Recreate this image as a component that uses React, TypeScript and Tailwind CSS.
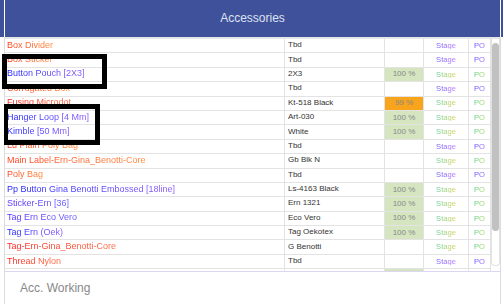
import React from "react";

type Tone = "o" | "r" | "b" | "p";
type Row = { name: string; tone: Tone; spec: string; pct?: "100" | "99"; green: boolean; ghost?: boolean };

const rows: Row[] = [
  { name: "Box Divider", tone: "o", spec: "Tbd", green: false },
  { name: "Box Sticker", tone: "o", spec: "Tbd", green: false },
  { name: "Button Pouch [2X3]", tone: "b", spec: "2X3", pct: "100", green: true },
  { name: "Corrugated Box", tone: "o", spec: "Tbd", green: false },
  { name: "Fusing Microdot", tone: "r", spec: "Kt-518 Black", pct: "99", green: true },
  { name: "Hanger Loop [4 Mm]", tone: "b", spec: "Art-030", pct: "100", green: true },
  { name: "Kimble [50 Mm]", tone: "b", spec: "White", pct: "100", green: true },
  { name: "Ld Plain Poly Bag", tone: "o", spec: "Tbd", green: false },
  { name: "Main Label-Ern-Gina_Benotti-Core", tone: "o", spec: "Gb Blk N", green: true },
  { name: "Poly Bag", tone: "o", spec: "Tbd", green: false },
  { name: "Pp Button Gina Benotti Embossed [18line]", tone: "b", spec: "Ls-4163 Black", pct: "100", green: true },
  { name: "Sticker-Ern [36]", tone: "p", spec: "Ern 1321", pct: "100", green: true },
  { name: "Tag Ern Eco Vero", tone: "p", spec: "Eco Vero", pct: "100", green: true },
  { name: "Tag Ern (Oek)", tone: "b", spec: "Tag Oekotex", pct: "100", green: true },
  { name: "Tag-Ern-Gina_Benotti-Core", tone: "r", spec: "G Benotti", green: true },
  { name: "Thread Nylon", tone: "r", spec: "Tbd", green: false },
  { name: "", tone: "b", spec: "", pct: "100", green: true, ghost: true },
];

const toneCls: Record<Tone, string> = {
  o: "bg-linear-to-r from-[#ff3a1c] to-[#ff8a3c]",
  r: "bg-linear-to-r from-[#ff1e1e] to-[#ff6a45]",
  b: "bg-linear-to-r from-[#1e1eff] to-[#8c5cff]",
  p: "bg-linear-to-r from-[#5a2cff] to-[#6a60ff]",
};

const stageGreen = "bg-linear-to-r from-[#4ccf8c] to-[#dccf5c]";
const stagePurple = "bg-linear-to-r from-[#6a58ff] to-[#c27cff]";
const poGreen = "bg-linear-to-r from-[#48cf7c] to-[#a6dc5e]";
const poPurple = "bg-linear-to-r from-[#6a48ff] to-[#9a70ff]";

export default function App() {
  return (
    <div className="relative w-[503px] h-[304px] overflow-hidden bg-white font-['Liberation_Sans',Arial,sans-serif]">
      {/* header */}
      <div className="flex h-[37px] bg-[#3f519b]">
        <div className="w-[4px]" />
        <div className="w-px bg-white" />
        <div className="flex-1 flex items-center justify-center text-[12px] text-[#dde2f0] pb-[1px]">Accessories</div>
        <div className="w-px bg-white" />
        <div className="w-[2px]" />
      </div>

      {/* body */}
      <div className="flex h-[267px]">
        <div className="w-[4px]" />
        <div className="w-px bg-[#dcdcdc]" />
        <div className="flex-1 flex flex-col">
          <div className="flex h-[235px] border-t-2 border-t-[#e6e6e6] border-b border-b-[#ddd6f2]">
            <div className="flex-1 overflow-hidden">
              {rows.map((r, i) => (
                <div key={i} className="flex h-[14.4px] border-b border-[#e3e3e3] shrink-0">
                  <div className="w-[280px] border-r border-[#e3e3e3] pl-[2px] flex items-center pb-[1px] text-[9px] leading-none whitespace-nowrap overflow-hidden">
                    {r.name && (
                      <span className={`inline-block bg-clip-text text-transparent ${toneCls[r.tone]}`}>{r.name}</span>
                    )}
                  </div>
                  <div className="w-[100px] border-r border-[#e3e3e3] pl-[3px] flex items-center pb-[1px] text-[8px] leading-none text-[#333] whitespace-nowrap">
                    {r.spec}
                  </div>
                  <div
                    className={`w-[39px] border-r border-[#e3e3e3] flex items-center justify-center text-[8px] leading-none text-[#888] ${
                      r.pct === "100" ? "bg-[#d4e5c0]" : r.pct === "99" ? "bg-[#f8a41c] text-[#7a6a3a]" : ""
                    }`}
                  >
                    {r.pct && !r.ghost ? `${r.pct} %` : ""}
                  </div>
                  <div className="w-[45px] border-r border-[#e3e3e3] flex items-center justify-center text-[7.6px] leading-none">
                    {!r.ghost && (
                      <span className={`inline-block bg-clip-text text-transparent ${r.green ? stageGreen : stagePurple}`}>Stage</span>
                    )}
                  </div>
                  <div className="w-[22px] border-r border-[#e3e3e3] flex items-center justify-center text-[7.6px] leading-none">
                    {!r.ghost && (
                      <span className={`inline-block bg-clip-text text-transparent ${r.green ? poGreen : poPurple}`}>PO</span>
                    )}
                  </div>
                </div>
              ))}
            </div>
            {/* scrollbar */}
            <div className="w-[9px] flex flex-col">
              <div className="h-[227px] border border-t-0 border-[#e2e2e2] rounded-b-[4px] flex flex-col items-center">
                <div className="mt-[4px] w-[7px] h-[188px] bg-[#c1c1c1] rounded-[4px]" />
              </div>
            </div>
          </div>
          <div className="pl-[15px] pt-[9px] text-[12px] leading-[14px] text-[#888]">Acc. Working</div>
        </div>
        <div className="w-px bg-[#dcdcdc]" />
        <div className="w-[2px]" />
      </div>

      {/* annotation boxes */}
      <div className="absolute left-[2px] top-[54px] w-[105px] h-[35px] border-[5px] border-black" />
      <div className="absolute left-[4px] top-[104px] w-[96px] h-[41px] border-[5px] border-l-[4px] border-black" />
    </div>
  );
}
